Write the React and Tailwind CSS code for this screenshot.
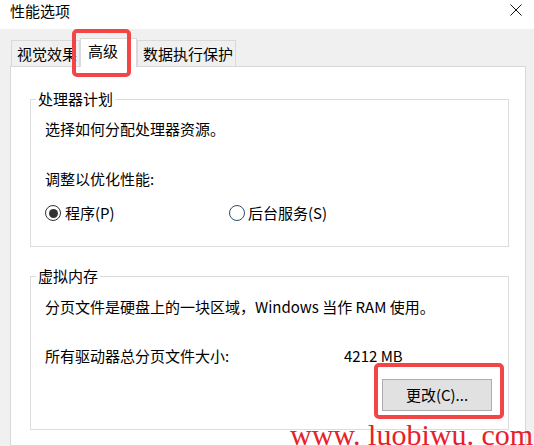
import React from 'react';

function Radio({ checked }) {
  return (
    <span
      className={`flex h-4 w-4 shrink-0 items-center justify-center rounded-full border bg-white ${
        checked ? 'border-[#333333]' : 'border-[#2d4d6d]'
      }`}
    >
      {checked && <span className="h-[9px] w-[9px] rounded-full bg-[#333333]" />}
    </span>
  );
}

function Group({ title, className, children }) {
  return (
    <fieldset className={`ml-[19px] w-[479px] border border-[#dcdcdc] ${className}`}>
      <legend className="ml-[5px] px-[2px] leading-[20px]">{title}</legend>
      {children}
    </fieldset>
  );
}

export default function App() {
  return (
    <div className="relative flex h-[446px] w-[534px] flex-col overflow-hidden bg-[#f0f0f0] font-['Noto_Sans_CJK_SC',sans-serif] text-[15px] text-black">
      {/* title bar */}
      <div className="flex h-[29px] shrink-0 items-start justify-between bg-white pl-[10px] pr-[12px]">
        <span className="pt-[1px] leading-[20px]">性能选项</span>
        <svg className="mt-[4px]" width="12" height="12" viewBox="0 0 12 12">
          <path d="M0.5 0.5 L11.5 11.5 M11.5 0.5 L0.5 11.5" stroke="#111" strokeWidth="1" />
        </svg>
      </div>

      {/* tabs */}
      <div className="flex items-end pl-[11px] pt-[9px]">
        <div className="h-[26px] w-[69px] border border-b-0 border-[#d9d9d9] bg-[#f0f0f0] pl-[5px] pt-[3px] leading-[20px]">
          视觉效果
        </div>
        <div className="relative z-10 -mb-px h-[29px] w-[57px] border border-b-0 border-[#d9d9d9] bg-white pl-[7px] pt-[2px] leading-[20px]">
          高级
        </div>
        <div className="h-[26px] w-[99px] border border-b-0 border-[#d9d9d9] bg-[#f0f0f0] pl-[5px] pt-[3px] leading-[20px]">
          数据执行保护
        </div>
      </div>

      {/* panel */}
      <div className="ml-[10px] w-[516px] flex-1 border border-[#d9d9d9] bg-white">
        <Group title="处理器计划" className="mt-[22px]">
          <div className="pb-[23px] pl-[14px] leading-[20px]">
            <p className="mt-[10px]">选择如何分配处理器资源。</p>
            <p className="mt-[30px]">调整以优化性能:</p>
            <div className="mt-[14px] flex h-[20px] items-center">
              <label className="flex w-[184px] items-center gap-[4px]">
                <Radio checked />
                <span>程序(P)</span>
              </label>
              <label className="flex items-center gap-[3px]">
                <Radio />
                <span>后台服务(S)</span>
              </label>
            </div>
          </div>
        </Group>

        <Group title="虚拟内存" className="mt-[19px]">
          <div className="pb-[18px] pl-[14px] leading-[20px]">
            <p className="mt-[11px]">分页文件是硬盘上的一块区域，Windows 当作 RAM 使用。</p>
            <div className="mt-[29px] flex">
              <span className="w-[299px]">所有驱动器总分页文件大小:</span>
              <span>4212 MB</span>
            </div>
            <div className="mt-[13px] flex justify-end pr-[16px]">
              <button className="h-[32px] w-[110px] border border-[#adadad] bg-[#e1e1e1] leading-[20px]">
                更改(C)...
              </button>
            </div>
          </div>
        </Group>
      </div>

      {/* annotation boxes */}
      <div className="pointer-events-none absolute left-[72px] top-[29px] z-20 h-[48px] w-[59px] rounded-[5px] border-4 border-[#f24545]" />
      <div className="pointer-events-none absolute left-[374px] top-[363px] z-20 h-[56px] w-[130px] rounded-[5px] border-4 border-[#f24545]" />

      {/* watermark */}
      <div className="pointer-events-none absolute left-[290px] top-[424px] z-20 whitespace-nowrap font-['Liberation_Serif',serif] text-[30px] leading-[22px] text-[#e8202a]">
        www. luobiwu. com
      </div>
    </div>
  );
}
